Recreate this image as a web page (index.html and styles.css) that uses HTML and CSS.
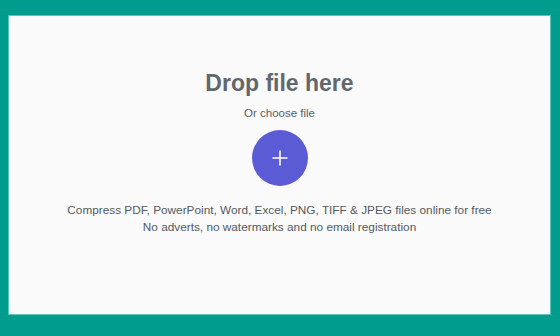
FILE: index.html
```html
<!DOCTYPE html>
<html>
<head>
<meta charset="utf-8">
<link rel="stylesheet" href="styles.css">
</head>
<body>
<div class="frame">
  <div class="drop">
    <h1 class="title">Drop file here</h1>
    <p class="choose">Or choose file</p>
    <button class="add" aria-label="Choose file">
      <svg width="18" height="18" viewBox="0 0 18 18"><path d="M9 1.5v15M1.5 9h15" stroke="#fff" stroke-width="1.6" fill="none"/></svg>
    </button>
    <p class="info">Compress PDF, PowerPoint, Word, Excel, PNG, TIFF &amp; JPEG files online for free<br>No adverts, no watermarks and no email registration</p>
  </div>
</div>
</body>
</html>
```
FILE: styles.css
```css
html, body {
  margin: 0;
  padding: 0;
}
body {
  background: #009d8f;
  font-family: "Liberation Sans", Arial, sans-serif;
}
.frame {
  width: 560px;
  height: 336px;
  box-sizing: border-box;
  padding: 16px 10px 22px 9px;
}
.drop {
  height: 100%;
  background: #fafafa;
  box-shadow: 0 0 0 1px #5cc4ba;
  display: flex;
  flex-direction: column;
  align-items: center;
}
.title {
  margin: 53px 0 0;
  font-size: 23px;
  line-height: 28px;
  font-weight: 700;
  color: #62676c;
}
.choose {
  margin: 9px 0 0;
  font-size: 11.5px;
  line-height: 14px;
  color: #5a5f64;
}
.add {
  margin-top: 10px;
  width: 56px;
  height: 56px;
  border: none;
  border-radius: 50%;
  background: #5b5bd6;
  display: flex;
  align-items: center;
  justify-content: center;
  padding: 0;
}
.info {
  margin: 16px 0 0;
  font-size: 11.8px;
  line-height: 17px;
  color: #55595e;
  text-align: center;
}
```
